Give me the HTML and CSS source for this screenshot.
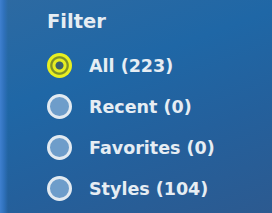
FILE: index.html
```html
<!DOCTYPE html>
<html lang="en">
<head>
  <meta charset="UTF-8">
  <meta name="viewport" content="width=device-width, initial-scale=1.0">
  <link rel="stylesheet" href="styles.css">
  <title>Filter</title>
</head>
<body>
  <div class="panel">
    <h2 class="title">Filter</h2>
    <ul class="filters">
      <li class="option selected"><span class="radio"></span><span class="label">All (223)</span></li>
      <li class="option"><span class="radio"></span><span class="label">Recent (0)</span></li>
      <li class="option"><span class="radio"></span><span class="label">Favorites (0)</span></li>
      <li class="option"><span class="radio"></span><span class="label">Styles (104)</span></li>
    </ul>
  </div>
</body>
</html>
```

FILE: styles.css
```css
html, body {
  margin: 0;
  height: 100%;
}
body {
  background: linear-gradient(90deg, #3f80cf 0px, #2f71bb 4px, rgba(0,0,0,0) 8px),
              linear-gradient(160deg, #2d6aa2 0%, #1f67a6 35%, #24609c 65%, #2c5a90 100%);
  overflow: hidden;
}
.panel {
  padding-top: 10px;
  padding-left: 47px;
  font-family: "DejaVu Sans", sans-serif;
  font-weight: bold;
  color: #e6edf3;
}
.title {
  margin: 0;
  font-size: 19.5px;
  line-height: 23px;
}
.filters {
  list-style: none;
  margin: 12px 0 0 0;
  padding: 0;
}
.option {
  display: flex;
  align-items: center;
  height: 41px;
}
.radio {
  box-sizing: border-box;
  width: 25px;
  height: 25px;
  border-radius: 50%;
  border: 3px solid #e2eaf1;
  background: #6e9dca;
  margin-right: 17px;
}
.selected .radio {
  border: none;
  background: radial-gradient(circle, #3a6070 0, #3a6070 3.5px, #e6ed22 4.5px, #e6ed22 6.5px, #7f9228 7.5px, #7f9228 8.8px, #e8ef20 9.8px, #e8ef20 12.5px);
}
.label {
  font-size: 17.5px;
  line-height: 20px;
}
```
